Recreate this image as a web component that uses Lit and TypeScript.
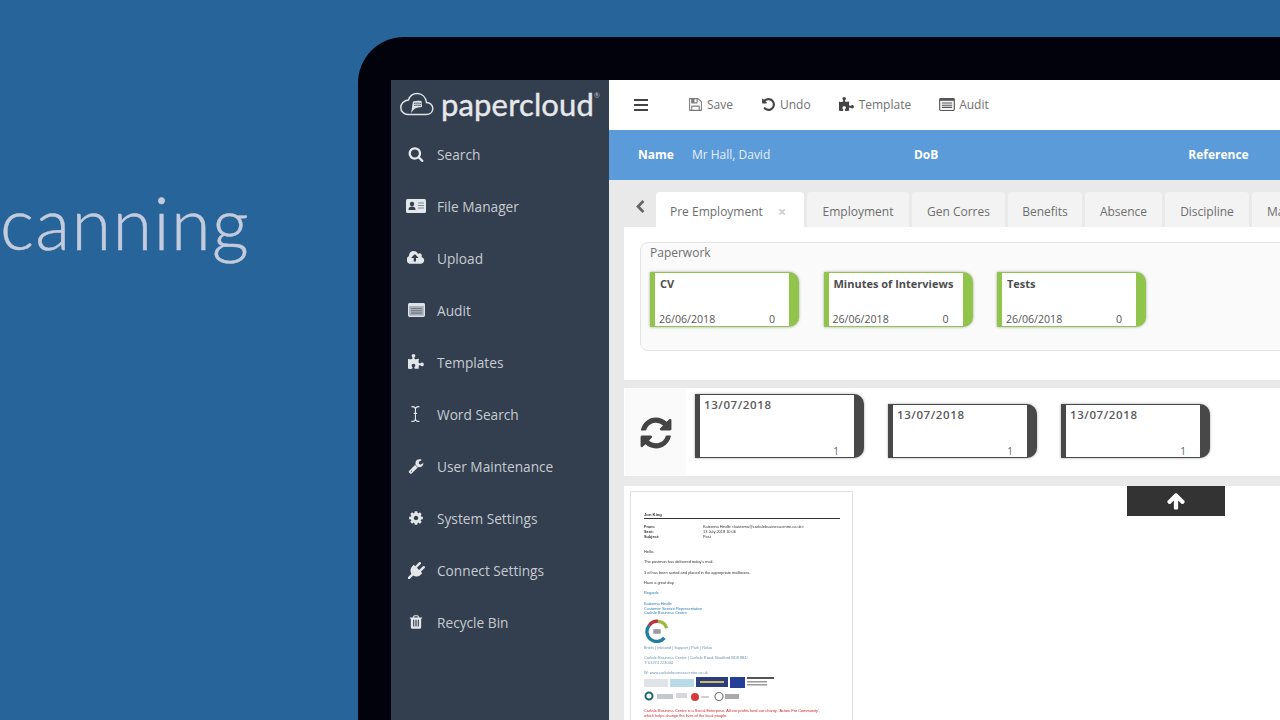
import { LitElement, html, css } from "lit";
import { customElement } from "lit/decorators.js";

const P: Record<string, string> = {
  search: "M1216 832q0-185-131.500-316.500t-316.500-131.500-316.500 131.500-131.500 316.500 131.500 316.500 316.500 131.500 316.500-131.500 131.500-316.500zm512 832q0 52-38 90t-90 38q-54 0-90-38l-343-342q-179 124-399 124-143 0-273.500-55.500t-225-150-150-225-55.500-273.500 55.500-273.500 150-225 225-150 273.500-55.500 273.500 55.500 225 150 150 225 55.500 273.500q0 220-124 399l343 343q37 37 37 90z",
  wrench: "M448 1472q0-26-19-45t-45-19-45 19-19 45 19 45 45 19 45-19 19-45zm644-420l-682 682q-37 37-90 37-52 0-91-37l-106-108q-38-36-38-90 0-53 38-91l681-681q39 98 114.500 173.500t173.500 114.500zm634-435q0 39-23 106-47 134-164.500 217.500t-258.500 83.500q-185 0-316.500-131.500t-131.500-316.500 131.500-316.500 316.500-131.500q58 0 121.500 16.500t107.500 46.500q16 11 16 28t-16 28l-293 169v224l193 107q5-3 79-48.500t135.500-81 70.500-35.500q15 0 23.500 10t8.500 25z",
  cog: "M1152 896q0-106-75-181t-181-75-181 75-75 181 75 181 181 75 181-75 75-181zm512-109v222q0 12-8 23t-20 13l-185 28q-19 54-39 91 35 50 107 138 10 12 10 25t-9 23q-27 37-99 108t-94 71q-12 0-26-9l-138-108q-44 23-91 38-16 136-29 186-7 28-36 28h-222q-14 0-24.500-8.500t-11.500-21.500l-28-184q-49-16-90-37l-141 107q-10 9-25 9-14 0-25-11-126-114-165-168-7-10-7-23 0-12 8-23 15-21 51-66.500t54-70.500q-27-50-41-99l-183-27q-13-2-21-12.500t-8-23.500v-222q0-12 8-23t19-13l186-28q14-46 39-92-40-57-107-138-10-12-10-24 0-10 9-23 26-36 98.500-107.500t94.500-71.500q13 0 26 10l138 107q44-23 91-38 16-136 29-186 7-28 36-28h222q14 0 24.500 8.500t11.500 21.500l28 184q49 16 90 37l142-107q9-9 24-9 13 0 25 10 129 119 165 170 7 8 7 22 0 12-8 23-15 21-51 66.500t-54 70.500q26 50 41 98l183 28q13 2 21 12.500t8 23.500z",
  trash: "M704 1376v-704q0-14-9-23t-23-9h-64q-14 0-23 9t-9 23v704q0 14 9 23t23 9h64q14 0 23-9t9-23zm256 0v-704q0-14-9-23t-23-9h-64q-14 0-23 9t-9 23v704q0 14 9 23t23 9h64q14 0 23-9t9-23zm256 0v-704q0-14-9-23t-23-9h-64q-14 0-23 9t-9 23v704q0 14 9 23t23 9h64q14 0 23-9t9-23zm-544-992h448l-48-117q-7-9-17-11h-317q-10 2-17 11zm928 32v64q0 14-9 23t-23 9h-96v948q0 83-47 143.500t-113 60.500h-832q-66 0-113-58.500t-47-141.500v-952h-96q-14 0-23-9t-9-23v-64q0-14 9-23t23-9h309l70-167q15-37 54-63t79-26h320q40 0 79 26t54 63l70 167h309q14 0 23 9t9 23z",
  plug: "M1755 453q37 38 37 90.500t-37 90.500l-401 400 150 150-160 160q-163 163-389.500 186.500t-411.500-100.500l-362 362h-181v-181l362-362q-124-185-100.500-411.500t186.500-389.500l160-160 150 150 400-401q38-37 91-37t90 37 37 90.500-37 90.500l-400 401 234 234 401-400q38-37 91-37t90 37z",
  puzzle: "M1664 1098q0 81-44.500 135t-123.500 54q-41 0-77.500-17.500t-59-38-56.500-38-71-17.500q-110 0-110 124 0 39 16 115t15 115v5q-22 0-33 1-34 3-97.500 11.500t-115.500 13.500-98 5q-61 0-103-26.500t-42-83.500q0-37 17.500-71t38-56.500 38-59 17.500-77.500q0-79-54-123.500t-135-44.500q-84 0-143 45.500t-59 127.500q0 43 15 83t33.500 64.500 33.500 53 15 50.500q0 45-46 89-37 35-117 35-95 0-245-24-9-2-27.500-4t-27.500-4l-13-2q-1 0-3-1-2 0-2-1v-1024q2 1 17.500 3.500t34 5 21.500 3.500q150 24 245 24 80 0 117-35 46-44 46-89 0-22-15-50.500t-33.500-53-33.500-64.500-15-83q0-82 59-127.500t144-45.500q80 0 134 44.500t54 123.500q0 41-17.500 77.500t-38 59-38 56.500-17.500 71q0 57 42 83.500t103 26.500q64 0 180-15t163-17v2q-1 2-3.500 17.500t-5 34-3.500 21.500q-24 150-24 245 0 80 35 117 44 46 89 46 22 0 50.500-15t53-33.500 64.500-33.500 83-15q82 0 127.500 59t45.500 143z",
  cursor: "M1216 128q-320 0-320 224v416h128v128h-128v544q0 224 320 224h64v128h-64q-272 0-384-146-112 146-384 146h-64v-128h64q320 0 320-224v-544h-128v-128h128v-416q0-224-320-224h-64v-128h64q272 0 384 146 112-146 384-146h64v128h-64z",
  up: "M1675 971q0 51-37 90l-75 75q-38 38-91 38-54 0-90-38l-294-293v704q0 52-37.500 84.500t-90.500 32.500h-128q-53 0-90.500-32.500t-37.500-84.500v-704l-294 293q-36 38-90 38t-90-38l-75-75q-38-38-38-90 0-53 38-91l651-651q35-37 90-37 54 0 91 37l651 651q37 39 37 91z",
  chev: "M1427 301l-531 531 531 531q19 19 19 45t-19 45l-166 166q-19 19-45 19t-45-19l-742-742q-19-19-19-45t19-45l742-742q19-19 45-19t45 19l166 166q19 19 19 45t-19 45z",
  undo: "M1664 896q0 156-61 298t-164 245-245 164-298 61q-172 0-327-72.500t-264-204.500q-7-10-6.500-22.500t8.500-20.500l137-138q10-9 25-9 16 2 23 12 73 95 179 147t225 52q104 0 198.500-40.500t163.500-109.500 109.500-163.500 40.500-198.500-40.500-198.500-109.500-163.500-163.500-109.500-198.500-40.500q-98 0-188 35.500t-160 101.500l137 138q31 30 14 69-17 40-59 40h-448q-26 0-45-19t-19-45v-448q0-42 40-59 39-17 69 14l130 129q107-101 244.500-156.500t284.500-55.500q156 0 298 61t245 164 164 245 61 298z",
  save: "M512 1536h768v-384h-768v384zm896 0h128v-896q0-14-10-38.500t-20-34.500l-281-281q-10-10-34-20t-39-10v416q0 40-28 68t-68 28h-576q-40 0-68-28t-28-68v-416h-128v1280h128v-416q0-40 28-68t68-28h832q40 0 68 28t28 68v416zm-384-928v-320q0-13-9.500-22.500t-22.500-9.500h-192q-13 0-22.500 9.500t-9.500 22.500v320q0 13 9.500 22.500t22.500 9.500h192q13 0 22.500-9.500t9.500-22.500zm640 32v928q0 40-28 68t-68 28h-1344q-40 0-68-28t-28-68v-1344q0-40 28-68t68-28h928q40 0 88 20t76 48l280 280q28 28 48 76t20 88z",
  refresh: "M1639 1056q0 5-1 7-64 268-268 434.500t-478 166.500q-146 0-282.500-55t-243.500-157l-129 129q-19 19-45 19t-45-19-19-45v-448q0-26 19-45t45-19h448q26 0 45 19t19 45-19 45l-137 137q71 66 161 102t187 36q134 0 250-65t186-179q11-17 53-117 8-23 30-23h192q13 0 22.500 9.500t9.500 22.500zm25-800v448q0 26-19 45t-45 19h-448q-26 0-45-19t-19-45 19-45l138-138q-148-137-349-137-134 0-250 65t-186 179q-11 17-53 117-8 23-30 23h-199q-13 0-22.500-9.500t-9.500-22.500v-7q65-268 270-434.500t480-166.500q146 0 284 55.500t245 156.500l130-129q19-19 45-19t45 19 19 45z",
};

const fa = (name: string, size: number, color = "currentColor") => html`<svg width=${size} height=${size} viewBox="0 0 1792 1792"><path fill=${color} d=${P[name]}></path></svg>`;

const idCard = html`<svg width="20" height="14" viewBox="0 0 20 14"><rect x="0" y="0" width="20" height="14" rx="1.500" fill="#e4e7ea"></rect><circle cx="6" cy="5" r="2.200" fill="#333f4f"></circle><path d="M2.500 11c0-2.400 1.500-3.400 3.500-3.400s3.500 1 3.500 3.400z" fill="#333f4f"></path><path d="M12 4h6M12 6.500h6M12 9h6" stroke="#7d8794" stroke-width="1.200"></path></svg>`;
const cloudUp = html`<svg width="18" height="14" viewBox="0 0 1920 1536"><path transform="translate(0 -128)" fill="#e4e7ea" d="M1216 864q0-14-9-23l-352-352q-9-9-23-9t-23 9l-351 351q-10 12-10 24 0 14 9 23t23 9h224v352q0 13 9.500 22.500t22.500 9.500h192q13 0 22.500-9.500t9.500-22.500v-352h224q13 0 22.500-9.500t9.500-22.500zm640 288q0 159-112.500 271.500t-271.500 112.500h-1088q-185 0-316.500-131.500t-131.500-316.500q0-130 70-240t188-165q-2-30-2-43 0-212 150-362t362-150q156 0 285.500 87t188.500 231q71-62 166-62 106 0 181 75t75 181q0 76-41 138 130 31 213.500 135.500t83.500 238.500z"></path></svg>`;
const listAlt = (bg: string, line: string, inner: string, w = 17, h = 14) => html`<svg width=${w} height=${h} viewBox="0 0 17 14"><rect x=".6" y=".6" width="15.800" height="12.800" rx="1.200" fill=${bg} stroke=${line} stroke-width="1.200"></rect><rect x=".6" y=".6" width="15.800" height="2.400" fill=${line}></rect><path d="M3 5.500h11M3 7.800h11M3 10.100h11" stroke=${inner} stroke-width="1.100"></path></svg>`;

const logo = html`<svg width="34" height="24" viewBox="0 0 34 24" fill="none"><path d="M8 22.500h18c4.200 0 6.800-2.600 6.800-6s-2.700-6-6.300-6c-.8-5.500-4.400-9-9.300-9-4.300 0-7.500 2.700-8.700 6.400-4.700.3-7.700 3.900-7.700 7.600 0 4 3.200 7 7.200 7z" stroke="#dfe2e6" stroke-width="1.500"></path><path d="M11 21c1-4 1.200-8 2-11.500 3-1 6-1 8.500-.4l.5 5.900c-3 .2-5 .5-7 1.600-1.500 1.200-2.600 2.700-4 4.400z" fill="#dfe2e6"></path><path d="M14 11.500c2.200-.5 4.500-.5 7 0M14 13.500c2.200-.5 4.500-.5 7 0" stroke="#333f4f" stroke-width=".8"></path></svg>`;

const docLogo = html`<svg width="26" height="24" viewBox="0 0 26 26" fill="none"><path d="M21 20.500A10.500 10.500 0 0 1 4.500 7" stroke="#1f7f9f" stroke-width="3.600"></path><path d="M4.500 7A10.500 10.500 0 0 1 14 2.500" stroke="#b8343c" stroke-width="3.600"></path><path d="M14 2.500A10.500 10.500 0 0 1 23.500 10" stroke="#9bb83c" stroke-width="3.600"></path><path d="M9 11h8v5H9z" fill="#9a9aa0"></path></svg>`;
const docLogos1 = html`<svg width="135" height="12" viewBox="0 0 135 12"><rect x="0" y="2" width="24" height="8" fill="#dfe3e6"></rect><rect x="26" y="2" width="24" height="8" fill="#b9dbe8"></rect><rect x="52" y="0" width="32" height="10" fill="#2a3d7c"></rect><rect x="56" y="4" width="24" height="2" fill="#d4b85c"></rect><rect x="86" y="0" width="15" height="11" fill="#243f95"></rect><rect x="103" y="0" width="27" height="2" fill="#555"></rect><rect x="103" y="4" width="20" height="1.500" fill="#999"></rect><rect x="103" y="7" width="20" height="1.500" fill="#999"></rect></svg>`;
const docLogos2 = html`<svg width="105" height="11" viewBox="0 0 105 11"><circle cx="5" cy="5" r="3.500" fill="none" stroke="#1c6a70" stroke-width="2"></circle><rect x="13" y="3" width="16" height="5" fill="#c3c8cc"></rect><rect x="32" y="2" width="11" height="5" fill="#d5d7da"></rect><circle cx="51" cy="6" r="4" fill="#d93a3a"></circle><rect x="57" y="5" width="8" height="2" fill="#d0d0d0"></rect><circle cx="75" cy="5.500" r="4" fill="none" stroke="#777" stroke-width="1.200"></circle><rect x="81" y="3" width="14" height="5" fill="#aaa"></rect></svg>`;

const NAV: [string, unknown][] = [
  ["Search", fa("search", 16, "#e4e7ea")],
  ["File Manager", idCard],
  ["Upload", cloudUp],
  ["Audit", listAlt("#a9afb7", "#dfe2e6", "#6e7782")],
  ["Templates", fa("puzzle", 17, "#e4e7ea")],
  ["Word Search", fa("cursor", 16, "#e4e7ea")],
  ["User Maintenance", fa("wrench", 16, "#e4e7ea")],
  ["System Settings", fa("cog", 16, "#e4e7ea")],
  ["Connect Settings", fa("plug", 17, "#e4e7ea")],
  ["Recycle Bin", fa("trash", 16, "#e4e7ea")],
];

const TABS: [string, number][] = [["Employment", 102], ["Gen Corres", 93], ["Benefits", 74], ["Absence", 77], ["Discipline", 84]];

@customElement("app-root")
export class AppRoot extends LitElement {
  static styles = css`
    :host { display: flex; width: 1280px; height: 720px; overflow: hidden; background: #266499; font-family: "Open Sans", sans-serif; }
    * { box-sizing: border-box; }
    .hero { width: 358px; flex: none; padding-top: 180px; font: 300 72px/84px Lato, sans-serif; color: #c4cbdc; letter-spacing: 1.4px; -webkit-text-stroke: .5px #c4cbdc; }
    .laptop { flex: 1; min-width: 0; margin-top: 37px; background: #02020c; border-top-left-radius: 46px; padding: 43px 0 0 33px; display: flex; }
    .screen { flex: 1; min-width: 0; display: flex; overflow: hidden; }
    .side { width: 218px; flex: none; background: #333f4f; color: #c6cbd1; }
    .brand { height: 48px; display: flex; align-items: center; padding-left: 9px; gap: 7px; }
    .word { font: 400 31px/47px Lato, sans-serif; color: #e6e8eb; letter-spacing: .15px; display: flex; -webkit-text-stroke: .4px #e6e8eb; }
    .word sup { font-size: 7px; line-height: 7px; margin-top: 11px; margin-left: 0; color: #b9bec5; -webkit-text-stroke: 0; }
    .nav { display: flex; flex-direction: column; }
    .nav-item { height: 52px; display: flex; align-items: center; padding-left: 15px; font-size: 13.7px; }
    .ni { width: 20px; margin-right: 11px; display: flex; justify-content: center; flex: none; }
    .main { flex: 1; min-width: 0; display: flex; flex-direction: column; background: #e9e9e9; overflow: hidden; }
    .toolbar { height: 50px; flex: none; background: #fff; display: flex; align-items: center; color: #707070; font-size: 12px; padding-left: 25px; padding-bottom: 1px; }
    .tb { display: flex; align-items: center; gap: 4px; margin-right: 28px; }
    .tb-menu { margin-right: 40px; width: 14px; height: 12px; display: flex; flex-direction: column; justify-content: space-between; }
    .tb-menu i { display: block; height: 2px; background: #444; }
    .namebar { height: 50px; flex: none; background: #5b9bd9; color: #e6f0fa; display: flex; align-items: center; font-size: 12px; padding: 0 0 2px 29px; }
    .namebar b { color: #fff; font-weight: 700; font-size: 12px; }
    .nm { margin-left: 18px; width: 222px; }
    .ref { margin-left: 250px; }
    .tabs { height: 47px; flex: none; display: flex; align-items: flex-end; padding-left: 47px; position: relative; gap: 3px; font-size: 12px; color: #6e6e6e; }
    .tab { height: 35px; padding-top: 3px; background: #f3f3f3; border-radius: 4px 4px 0 0; display: flex; align-items: center; justify-content: center; flex: none; white-space: nowrap; }
    .tab.first { width: 148px; background: #fff; justify-content: flex-start; padding-left: 14px; gap: 15px; }
    .tab.last { width: 60px; justify-content: flex-start; padding-left: 15px; }
    .x { color: #d0d0d0; font-size: 15px; font-weight: 700; line-height: 12px; }
    .chev { position: absolute; left: 24px; top: 20px; color: #666; display: flex; }
    .body { margin-left: 15px; display: flex; flex-direction: column; flex: 1; }
    .panel { height: 153px; flex: none; background: #fff; padding: 15px 0 0 16px; }
    .fieldset { height: 109px; margin-right: -20px; background: #fafafa; border: 1px solid #e4e4e4; border-radius: 8px; padding: 1px 0 0 9px; }
    .legend { font-size: 12px; line-height: 18px; color: #6f6f6f; }
    .cards { display: flex; margin-top: 10px; gap: 24.500px; }
    .card { background: #fff; border-style: solid; border-radius: 0 10px 10px 0; box-shadow: 0 0 3px rgba(0,0,0,.35); display: flex; flex-direction: column; flex: none; color: #555; }
    .green { width: 149px; height: 55px; border-color: #91c44a; border-width: 1px 10px 1px 5px; padding: 4px 14px 0 4px; justify-content: space-between; }
    .title { font-weight: 700; font-size: 11px; line-height: 14px; color: #4d4d4d; white-space: nowrap; padding-left: 1px; }
    .foot { display: flex; justify-content: space-between; font-size: 10.6px; line-height: 14px; }
    .spacer { height: 8px; flex: none; }
    .row { height: 88px; flex: none; background: #fff; display: flex; }
    .sync { width: 61px; flex: none; background: #fafafa; display: flex; justify-content: center; align-items: center; margin-left: 1px; color: #444; padding-top: 1px; }
    .gcards { display: flex; gap: 24px; margin-left: 9px; align-items: flex-end; height: 70px; }
    .dark { width: 149px; height: 54px; border-color: #484848; border-width: 1px 10px 1px 5px; padding: 1px 14px 0 4px; justify-content: space-between; }
    .dark.big { width: 169px; height: 64px; padding-right: 15px; }
    .date { font-weight: 600; font-size: 11.5px; line-height: 17px; color: #5a5a5a; letter-spacing: .6px; }
    .n { align-self: flex-end; font-size: 10px; line-height: 12px; color: #666; }
    .gap2 { height: 10px; flex: none; }
    .docs { flex: 1; background: #fff; position: relative; padding: 5px 0 0 6px; overflow: hidden; }
    .up { position: absolute; left: 503px; top: 0; width: 98px; height: 30px; background: #333; display: flex; align-items: center; justify-content: center; }
    .doc { width: 223px; height: 300px; border: 1px solid #e2e2e2; padding: 21px 12px 0 13px; background: #fff; font: 3.9px/4.8px "Liberation Sans", sans-serif; color: #333; filter: blur(.45px); }
    .doc-head { font-weight: 700; font-size: 4.2px; border-bottom: 1px solid #333; height: 6px; margin-bottom: 6px; }
    .meta { display: grid; grid-template-columns: 59px 1fr; }
    .meta b { font-weight: 700; }
    .p { margin-top: 5.600px; }
    .hello { margin-top: 10.500px; }
    .blue { color: #2b7cb0; }
    .grey { color: #6d93ad; margin-top: 5px; }
    .red { color: #d8232a; margin-top: 5.500px; }
    .dl { display: block; margin-top: 2px; height: 12px; }
    .dl.big { height: 24px; margin-top: 3px; margin-bottom: -2px; }
  `;

  private greenCard(title: string) {
    return html`<div class="card green"><div class="title">${title}</div><div class="foot"><span>26/06/2018</span><span>0</span></div></div>`;
  }

  private darkCard(big = false) {
    return html`<div class="card dark ${big ? "big" : ""}"><div class="date">13/07/2018</div><div class="n">1</div></div>`;
  }

  render() {
    return html`
      <div class="hero">canning</div>
      <div class="laptop">
        <div class="screen">
          <aside class="side">
            <div class="brand">${logo}<div class="word">papercloud<sup>®</sup></div></div>
            <nav class="nav">
              ${NAV.map(([label, icon]) => html`<div class="nav-item"><span class="ni">${icon}</span>${label}</div>`)}
            </nav>
          </aside>
          <section class="main">
            <div class="toolbar">
              <div class="tb-menu"><i></i><i></i><i></i></div>
              <div class="tb">${fa("save", 15, "#7a7a7a")}Save</div>
              <div class="tb">${fa("undo", 15, "#444")}Undo</div>
              <div class="tb">${fa("puzzle", 16, "#444")}Template</div>
              <div class="tb">${listAlt("#f4f4f4", "#555", "#555", 16, 13)}Audit</div>
            </div>
            <div class="namebar"><b>Name</b><span class="nm">Mr Hall, David</span><b>DoB</b><b class="ref">Reference</b></div>
            <div class="tabs">
              <span class="chev">${fa("chev", 14)}</span>
              <div class="tab first">Pre Employment <span class="x">×</span></div>
              ${TABS.map(([t, w]) => html`<div class="tab" style="width:${w}px">${t}</div>`)}
              <div class="tab last">Ma</div>
            </div>
            <div class="body">
              <div class="panel">
                <div class="fieldset">
                  <div class="legend">Paperwork</div>
                  <div class="cards">${this.greenCard("CV")}${this.greenCard("Minutes of Interviews")}${this.greenCard("Tests")}</div>
                </div>
              </div>
              <div class="spacer"></div>
              <div class="row">
                <div class="sync">${fa("refresh", 36)}</div>
                <div class="gcards">${this.darkCard(true)}${this.darkCard()}${this.darkCard()}</div>
              </div>
              <div class="gap2"></div>
              <div class="docs">
                <div class="doc">
                  <div class="doc-head">Jon King</div>
                  <div class="meta"><b>From:</b><span>Kateema Hindle &lt;kateema@carlislebusinesscentre.co.uk&gt;</span><b>Sent:</b><span>13 July 2018 10:06</span><b>Subject:</b><span>Post</span></div>
                  <div class="p hello">Hello,</div>
                  <div class="p">The postman has delivered today's mail.</div>
                  <div class="p">3 of has been sorted and placed in the appropriate mailboxes.</div>
                  <div class="p">Have a great day.</div>
                  <div class="p blue">Regards</div>
                  <div class="p blue">Kateema Hindle<br />Customer Service Representative<br />Carlisle Business Centre</div>
                  <div class="dl big">${docLogo}</div>
                  <div class="p grey">Briefs | Inbound | Support | Park | Relax</div>
                  <div class="p grey">Carlisle Business Centre | Carlisle Road, Bradford BD8 8BD<br />T: 01274 223004</div>
                  <div class="p grey">W: www.carlislebusinesscentre.co.uk</div>
                  <div class="dl">${docLogos1}</div>
                  <div class="dl">${docLogos2}</div>
                  <div class="p red">Carlisle Business Centre is a Social Enterprise. All our profits fund our charity, 'Action For Community',<br />which helps change the lives of the local people.</div>
                </div>
                <div class="up">${fa("up", 20, "#fff")}</div>
              </div>
            </div>
          </section>
        </div>
      </div>
    `;
  }
}
